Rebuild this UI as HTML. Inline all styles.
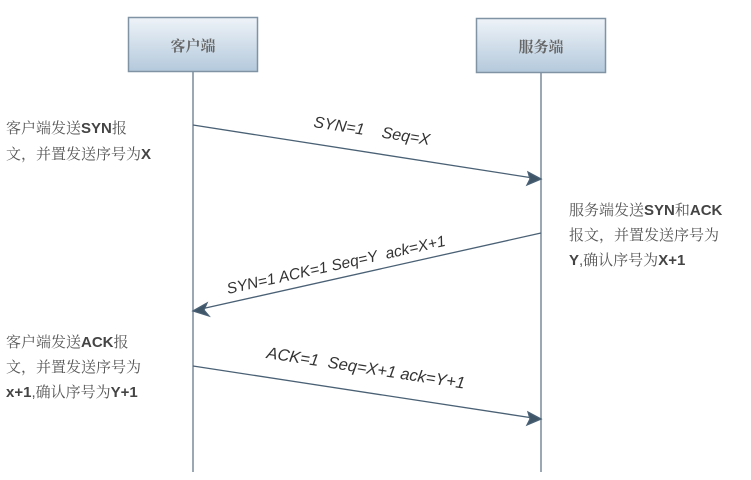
<!DOCTYPE html>
<html><head><meta charset="utf-8"><style>
html,body{margin:0;padding:0;background:#fff;width:751px;height:480px;overflow:hidden}
svg{display:block}
.cn{font-family:"Liberation Sans","Noto Serif CJK SC","Noto Sans CJK SC",sans-serif;font-size:15px;fill:#555}
.b{font-weight:bold;fill:#444}
.lab{font-family:"Liberation Sans",sans-serif;font-style:italic;font-size:16px;fill:#333}
</style></head><body>
<svg width="751" height="480" viewBox="0 0 751 480">
<defs>
<linearGradient id="g" x1="0" y1="0" x2="0" y2="1">
<stop offset="0" stop-color="#eef3f8"/><stop offset="1" stop-color="#b4c9dc"/>
</linearGradient>
</defs>
<rect x="128.5" y="17.5" width="129" height="54" fill="url(#g)" stroke="#7f93a5" stroke-width="1.5"/>
<rect x="476.5" y="18.5" width="129" height="54" fill="url(#g)" stroke="#7f93a5" stroke-width="1.5"/>
<text x="193" y="51" text-anchor="middle" class="cn" style="fill:#666;font-size:15px;font-weight:bold">客户端</text>
<text x="541" y="52" text-anchor="middle" class="cn" style="fill:#666;font-size:15px;font-weight:bold">服务端</text>
<line x1="193" y1="72" x2="193" y2="472" stroke="#7a8c9c" stroke-width="1.5"/>
<line x1="541" y1="73" x2="541" y2="472" stroke="#7a8c9c" stroke-width="1.5"/>
<g stroke="#4a6175" stroke-width="1.3" fill="#3f5568">
<line x1="193" y1="125" x2="533" y2="178"/>
<path d="M541 179 L528 172 L530 179 L527 185 Z"/>
<line x1="541" y1="233" x2="201" y2="309"/>
<path d="M193 311 L207 303 L204 310 L209 316 Z"/>
<line x1="193" y1="366" x2="533" y2="418"/>
<path d="M541 419 L528 412 L530 419 L527 425 Z"/>
</g>
<text class="lab" transform="translate(313,127) rotate(8.8)">SYN=1 &#160;&#160;&#160;Seq=X</text>
<text class="lab" transform="translate(228,294) rotate(-12.5)" style="font-size:15.5px">SYN=1 ACK=1 Seq=Y &#160;ack=X+1</text>
<text class="lab" transform="translate(266,358) rotate(8.8)" style="font-size:16.5px">ACK=1 &#160;Seq=X+1 ack=Y+1</text>
<text class="cn" x="6" y="133">客户端发送<tspan class="b">SYN</tspan>报</text>
<text class="cn" x="6" y="159">文，并置发送序号为<tspan class="b">X</tspan></text>
<text class="cn" x="6" y="347">客户端发送<tspan class="b">ACK</tspan>报</text>
<text class="cn" x="6" y="372">文，并置发送序号为</text>
<text class="cn" x="6" y="397"><tspan class="b">x+1</tspan>,确认序号为<tspan class="b">Y+1</tspan></text>
<text class="cn" x="569" y="215">服务端发送<tspan class="b">SYN</tspan>和<tspan class="b">ACK</tspan></text>
<text class="cn" x="569" y="240">报文，并置发送序号为</text>
<text class="cn" x="569" y="265"><tspan class="b">Y</tspan>,确认序号为<tspan class="b">X+1</tspan></text>
</svg>
</body></html>
